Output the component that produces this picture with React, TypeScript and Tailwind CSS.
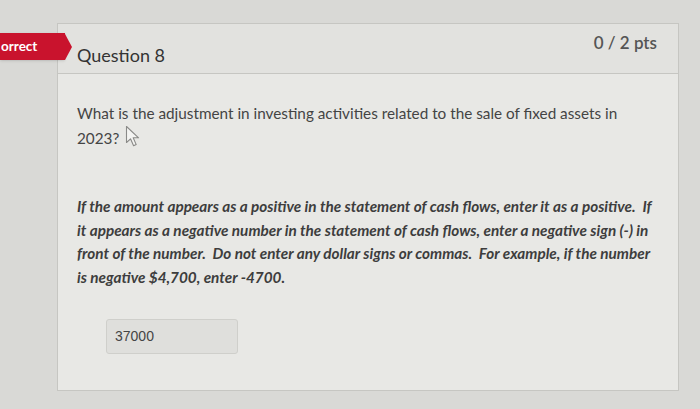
import React from 'react';

function CursorIcon() {
  return (
    <svg width="16" height="23" viewBox="0 0 16 23" className="inline-block align-top ml-[6px] mt-[-1px]">
      <path
        d="M1.5 1.5 L1.5 17.5 L5.5 13.8 L8.6 20.8 L11.2 19.6 L8.2 12.8 L13.6 12.8 Z"
        fill="#f4f4f2"
        stroke="#8a8a88"
        strokeWidth="1.1"
        strokeLinejoin="round"
      />
    </svg>
  );
}

export default function App() {
  return (
    <div className="relative w-[700px] h-[409px] overflow-hidden bg-[#d9d9d6] font-['Lato',sans-serif] text-[#3b3b3b]">
      {/* Incorrect tag */}
      <div className="absolute left-0 top-[33px] flex h-[27px] items-center">
        <div className="flex h-full w-[65px] items-center bg-[#c9132d] pl-[1px] text-[13.5px] font-bold text-white shadow-sm">
          orrect
        </div>
        <div className="h-0 w-0 border-y-[13.5px] border-l-[7px] border-y-transparent border-l-[#c9132d]" />
      </div>

      <div className="ml-[57px] pt-[23px]">
        <div className="w-[622px] h-[368px] border border-[#c6c6c2] bg-[#e8e8e5]">
          {/* Header */}
          <div className="flex h-[50px] justify-between border-b border-[#c6c6c2] bg-[#e2e2df] pl-[19px] pr-[21px]">
            <h2 className="pt-[20px] text-[18px] leading-[22px] text-[#333]">Question 8</h2>
            <div className="pt-[8px] text-[17px] leading-[22px] font-semibold text-[#555]">0 / 2 pts</div>
          </div>

          {/* Body */}
          <div className="px-[19px] pt-[27px]">
            <p className="text-[15.3px] leading-[25px] text-[#444]">
              What is the adjustment in investing activities related to the sale of fixed assets in 2023?
              <CursorIcon />
            </p>
            <p className="mt-[44px] whitespace-nowrap text-[15.3px] leading-[23.5px] font-bold italic text-[#3d3d3d]">
              If the amount appears as a positive in the statement of cash flows, enter it as a positive.&nbsp; If
              <br />
              it appears as a negative number in the statement of cash flows, enter a negative sign (-) in
              <br />
              front of the number.&nbsp; Do not enter any dollar signs or commas.&nbsp; For example, if the number
              <br />
              is negative $4,700, enter -4700.
            </p>
            <div className="ml-[29px] mt-[30px] flex h-[35px] w-[132px] items-center rounded-[3px] border border-[#cfcfcb] bg-[#dfdfdc] pl-[8px] font-['Liberation_Sans',sans-serif] text-[14px] text-[#454545]">
              37000
            </div>
          </div>
        </div>
      </div>
    </div>
  );
}
